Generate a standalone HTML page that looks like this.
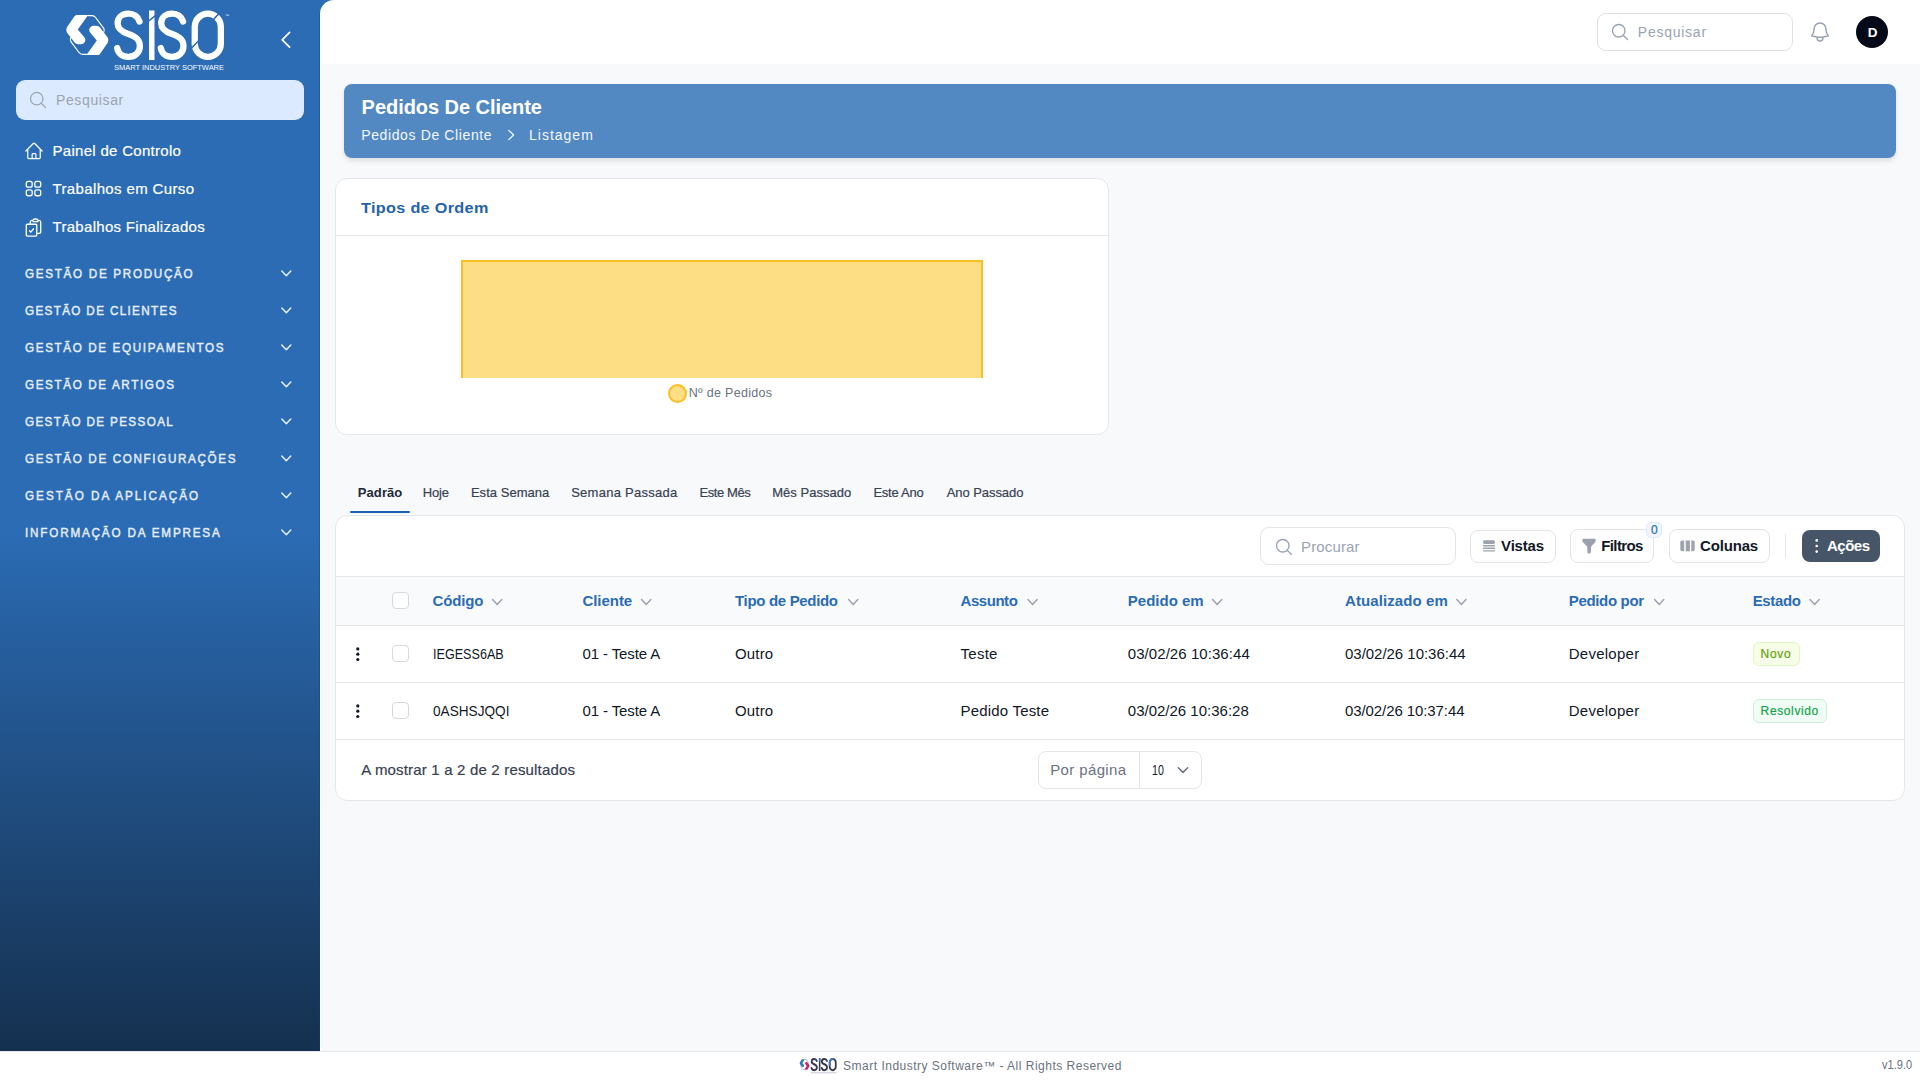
<!DOCTYPE html>
<html><head><meta charset="utf-8">
<style>
*{box-sizing:border-box;margin:0;padding:0}
html,body{width:1920px;height:1080px;overflow:hidden;background:#f8f9fb;font-family:"Liberation Sans",sans-serif;color:#111827}
.a{position:absolute;white-space:nowrap}
.t{line-height:1}
#side{position:absolute;left:0;top:0;width:320px;height:1051px;background:linear-gradient(to bottom,#2b6cb5 0%,#2b6cb5 50%,#15304f 100%)}
#top{position:absolute;left:320px;top:0;width:1600px;height:64px;background:#fff;border-top-left-radius:14px}
svg{display:block}
.card{position:absolute;background:#fff;border:1px solid #e5e7eb;border-radius:12px}
.btn{position:absolute;background:#fff;border:1px solid #e2e4e8;border-radius:8px}
.m{-webkit-text-stroke:0.2px currentColor}
.b{font-weight:700}
.s{-webkit-text-stroke:0.45px currentColor}
</style></head><body>

<div id="side"></div>
<div class="a" style="left:318px;top:0;width:18px;height:18px;background:#2b6cb5"></div>
<div id="top"></div>
<div class="a" style="left:319px;top:12px;width:1px;height:1039px;background:rgba(20,60,120,.35)"></div>
<div class="a" style="left:320px;top:64px;width:1px;height:987px;background:#fff"></div>
<!-- logo -->
<svg class="a" style="left:0;top:0" width="320" height="80" viewBox="0 0 320 80">
 <g fill="#fff">
  <path d="M76.7 15.1 L88.2 15.1 L77.8 29.6 L84.3 37.2 Q86.6 40.5 84 43 Q82.5 44.3 80.5 44.2 L78 44.2 Q76 44.2 74.6 42.6 L66.9 32.6 Q65.5 30 66.9 27.2 L74.3 16.6 Q75.3 15.1 76.7 15.1 Z"/>
  <path d="M97.9 54.9 L86.4 54.9 L96.8 40.4 L90.3 32.8 Q88 29.5 90.6 27 Q92.1 25.7 94.1 25.8 L96.6 25.8 Q98.6 25.8 100 27.4 L107.7 37.4 Q109.1 40 107.7 42.8 L100.3 53.4 Q99.3 54.9 97.9 54.9 Z"/>
 </g>
 <g fill="none" stroke="#fff" stroke-width="1.2">
  <path d="M87.8 15.7 L92 15.7 Q94.2 15.7 95.6 17.5 L103.7 28.3 Q105 30.5 103.6 32.6"/>
  <path d="M86.8 54.3 L82.6 54.3 Q80.4 54.3 79 52.5 L70.9 41.7 Q69.6 39.5 71 37.4"/>
 </g>
 <g fill="none" stroke="#fff" stroke-width="6.3" stroke-linecap="round">
  <path id="sp" d="M139.5 21.5 C138 16.5 133.5 13.65 128.5 13.65 C122 13.65 117.6 17.5 117.6 23.2 C117.6 29.5 122.5 32 128.5 34 C135 36.2 139.9 39 139.9 46 C139.9 52.5 135 56.85 128.5 56.85 C122 56.85 118 53 117.2 48"/>
  <path d="M183.1 21.5 C181.6 16.5 177.1 13.65 172.1 13.65 C165.6 13.65 161.2 17.5 161.2 23.2 C161.2 29.5 166.1 32 172.1 34 C178.6 36.2 183.5 39 183.5 46 C183.5 52.5 178.6 56.85 172.1 56.85 C165.6 56.85 161.6 53 160.8 48"/>
  <rect x="194.75" y="13.65" width="26.1" height="43.2" rx="13.05"/>
 </g>
 <rect x="149" y="10.5" width="5.5" height="49.5" fill="#fff"/>
 <g stroke="#2b6cb5" stroke-width="1.6" fill="none">
  <path d="M147.5 22 L156 15.2"/>
  <path d="M211.5 21.5 L219.5 13"/>
  <path d="M191 48.5 L199.5 40"/>
 </g>
 <text x="225" y="17" font-size="4" fill="#fff" font-family="Liberation Sans">™</text>
 <text x="114" y="70" font-size="7.6" fill="#fff" font-family="Liberation Sans" textLength="110" lengthAdjust="spacingAndGlyphs">SMART INDUSTRY SOFTWARE</text>
</svg>
<svg class="a" style="left:270px;top:24px" width="30" height="32" viewBox="270 24 30 32"><path d="M289.6 32.4 L282.2 39.8 L289.6 47.2" fill="none" stroke="#fff" stroke-width="1.7" stroke-linecap="round" stroke-linejoin="round"/></svg>
<div class="a" style="left:16px;top:80px;width:288px;height:40px;background:#dbeafe;border-radius:9px"></div>
<svg class="a" style="left:27.9px;top:90.2px" width="20" height="20" viewBox="0 0 24 24"><path d="m21 21-5.197-5.197m0 0A7.5 7.5 0 1 0 5.196 5.196a7.5 7.5 0 0 0 10.607 10.607Z" fill="none" stroke="#9ca3af" stroke-width="1.5" stroke-linecap="round"/></svg>
<svg class="a" style="left:23.75px;top:140.7px" width="20" height="20" viewBox="0 0 24 24"><path d="m2.25 12 8.954-8.955c.44-.439 1.152-.439 1.591 0L21.750 12M4.5 9.75v10.125c0 .621.504 1.125 1.125 1.125H9.75v-4.875c0-.621.504-1.125 1.125-1.125h2.25c.621 0 1.125.504 1.125 1.125V21h4.125c.621 0 1.125-.504 1.125-1.125V9.75M8.25 21h8.250" fill="none" stroke="#fff" stroke-width="1.5" stroke-linecap="round" stroke-linejoin="round"/></svg>
<svg class="a" style="left:23.3px;top:178.2px" width="21" height="21" viewBox="0 0 24 24"><path d="M3.75 6A2.25 2.25 0 0 1 6 3.750h2.25A2.25 2.25 0 0 1 10.5 6v2.25a2.25 2.25 0 0 1-2.25 2.25H6a2.25 2.25 0 0 1-2.25-2.25V6ZM3.75 15.75A2.25 2.25 0 0 1 6 13.5h2.25a2.25 2.25 0 0 1 2.25 2.25V18a2.25 2.25 0 0 1-2.25 2.25H6A2.25 2.25 0 0 1 3.75 18v-2.25ZM13.5 6a2.25 2.25 0 0 1 2.25-2.25H18A2.25 2.25 0 0 1 20.25 6v2.25A2.25 2.25 0 0 1 18 10.5h-2.25a2.25 2.25 0 0 1-2.25-2.25V6ZM13.5 15.75a2.25 2.25 0 0 1 2.25-2.25H18a2.25 2.25 0 0 1 2.25 2.25V18A2.25 2.25 0 0 1 18 20.25h-2.25A2.25 2.25 0 0 1 13.5 18v-2.25Z" fill="none" stroke="#fff" stroke-width="1.5"/></svg>
<svg class="a" style="left:23.1px;top:216.5px" width="21" height="21" viewBox="0 0 24 24"><path d="M11.35 3.836c-.065.21-.1.433-.1.664 0 .414.336.75.75.75h4.5a.75.75 0 0 0 .75-.75 2.25 2.25 0 0 0-.1-.664m-5.8 0A2.251 2.251 0 0 1 13.5 2.25H15c1.012 0 1.867.668 2.15 1.586m-5.8 0c-.376.023-.75.05-1.124.08C9.095 4.010 8.250 4.973 8.250 6.108V8.25m8.9-4.414c.376.023.75.05 1.124.08 1.131.094 1.976 1.057 1.976 2.192V16.5A2.25 2.25 0 0 1 18 18.75h-2.25m-7.5-10.5H4.875c-.621 0-1.125.504-1.125 1.125v11.25c0 .621.504 1.125 1.125 1.125h9.75c.621 0 1.125-.504 1.125-1.125V18.75m-7.5-10.5h6.375c.621 0 1.125.504 1.125 1.125v9.375m-8.25-3 1.5 1.5 3-3.75" fill="none" stroke="#fff" stroke-width="1.5" stroke-linecap="round" stroke-linejoin="round"/></svg>
<svg class="a" style="left:270px;top:260px" width="30" height="290" viewBox="270 260 30 290"><g fill="none" stroke="#e6eefa" stroke-width="1.5" stroke-linecap="round" stroke-linejoin="round">
 <path d="M281.8 271 L286.3 275.8 L290.8 271"/><path d="M281.8 308 L286.3 312.8 L290.8 308"/><path d="M281.8 345 L286.3 349.8 L290.8 345"/><path d="M281.8 382 L286.3 386.8 L290.8 382"/><path d="M281.8 419 L286.3 423.8 L290.8 419"/><path d="M281.8 456 L286.3 460.8 L290.8 456"/><path d="M281.8 493 L286.3 497.8 L290.8 493"/><path d="M281.8 530 L286.3 534.8 L290.8 530"/></g></svg>

<!-- topbar -->
<div class="a" style="left:1597px;top:13px;width:196px;height:38px;border:1px solid #dfe2e7;border-radius:9px;background:#fff"></div>
<svg class="a" style="left:1610px;top:22.3px" width="20" height="20" viewBox="0 0 24 24"><path d="m21 21-5.197-5.197m0 0A7.5 7.5 0 1 0 5.196 5.196a7.5 7.5 0 0 0 10.607 10.607Z" fill="none" stroke="#9aa3b2" stroke-width="1.6" stroke-linecap="round"/></svg>
<svg class="a" style="left:1808px;top:20.25px" width="24" height="24" viewBox="0 0 24 24"><path d="M14.857 17.082a23.848 23.848 0 0 0 5.454-1.31A8.967 8.967 0 0 1 18 9.75V9A6 6 0 0 0 6 9v.75a8.967 8.967 0 0 1-2.312 6.022c1.733.64 3.56 1.085 5.455 1.31m5.714 0a24.255 24.255 0 0 1-5.714 0m5.714 0a3 3 0 1 1-5.714 0" fill="none" stroke="#9aa3b2" stroke-width="1.5" stroke-linecap="round" stroke-linejoin="round"/></svg>
<div class="a" style="left:1856px;top:16px;width:32px;height:32px;border-radius:50%;background:#050a18"></div>

<!-- header card -->
<div class="a" style="left:344px;top:84px;width:1552px;height:73.5px;background:#5389c3;border-radius:8px;box-shadow:0 3px 5px rgba(0,0,0,.10)"></div>
<svg class="a" style="left:500px;top:125px" width="20" height="20" viewBox="500 125 20 20"><path d="M508.8 130.4 L513.6 135 L508.8 139.6" fill="none" stroke="#f3f7fc" stroke-width="1.3" stroke-linecap="round" stroke-linejoin="round"/></svg>

<!-- chart card -->
<div class="card" style="left:335px;top:178px;width:774px;height:257px"></div>
<div class="a" style="left:336px;top:235px;width:772px;height:1px;background:#e5e7eb"></div>
<div class="a" style="left:461px;top:260px;width:522px;height:118px;background:#fdde84;border:2px solid #fbbf24;border-bottom:0"></div>
<div class="a" style="left:667.5px;top:384px;width:19px;height:19px;border-radius:50%;background:#fdde84;border:2px solid #fbbf24"></div>

<!-- tabs -->
<div class="a" style="left:350px;top:511px;width:60px;height:2px;background:#1d5fb4;border-radius:1px"></div>

<!-- table card -->
<div class="card" style="left:335px;top:515px;width:1570px;height:286px;overflow:hidden">
  <div style="position:absolute;left:0;top:60px;width:100%;height:50px;background:#f9fafb;border-top:1px solid #e5e7eb;border-bottom:1px solid #e5e7eb"></div>
  <div style="position:absolute;left:0;top:166px;width:100%;height:1px;background:#e5e7eb"></div>
  <div style="position:absolute;left:0;top:223px;width:100%;height:1px;background:#e5e7eb"></div>
</div>
<!-- toolbar -->
<div class="btn" style="left:1260px;top:527px;width:196px;height:38px;border-radius:9px"></div>
<svg class="a" style="left:1273.5px;top:536.5px" width="20" height="20" viewBox="0 0 24 24"><path d="m21 21-5.197-5.197m0 0A7.5 7.5 0 1 0 5.196 5.196a7.5 7.5 0 0 0 10.607 10.607Z" fill="none" stroke="#9aa3b2" stroke-width="1.6" stroke-linecap="round"/></svg>
<div class="btn" style="left:1470px;top:529.5px;width:86px;height:33px"></div>
<svg class="a" style="left:1480px;top:537px" width="18" height="18" viewBox="1480 537 18 18"><g fill="#9ca3af"><rect x="1483" y="540.3" width="12" height="3.6" rx="1.6"/><rect x="1483" y="545" width="12" height="1.4" rx=".5"/><rect x="1483" y="547.6" width="12" height="1.4" rx=".5"/><rect x="1483" y="550.2" width="12" height="1.4" rx=".5"/></g></svg>
<div class="btn" style="left:1570px;top:529px;width:84px;height:34px"></div>
<svg class="a" style="left:1580px;top:537px" width="18" height="18" viewBox="1580 537 18 18"><path d="M1582.4 539.6 Q1582.4 538.8 1583.2 538.8 L1594.8 538.8 Q1595.6 538.8 1595.6 539.6 L1595.6 541 Q1595.6 541.6 1595 542.2 L1591.2 546.4 L1590.8 552.2 Q1590.7 553.4 1589.6 553.4 L1588.6 553.4 Q1587.6 553.4 1587.5 552.4 L1587.1 546.4 L1583 542.2 Q1582.4 541.6 1582.4 541 Z" fill="#9aa2b0"/></svg>
<div class="a" style="left:1645.5px;top:522px;width:16px;height:16px;border-radius:5px;background:#eff6ff;border:1px solid #dbeafe"></div>
<div class="btn" style="left:1668.5px;top:529px;width:101.5px;height:34px"></div>
<svg class="a" style="left:1678px;top:537px" width="20" height="18" viewBox="1678 537 20 18"><g fill="#9ca3af"><path d="M1682 540.5 L1684.2 540.5 L1684.2 551.3 L1682 551.3 Q1680.3 551.3 1680.3 549.6 L1680.3 542.2 Q1680.3 540.5 1682 540.5 Z"/><rect x="1685.7" y="540.5" width="4.2" height="10.8"/><path d="M1691.3 540.5 L1693 540.5 Q1694.7 540.5 1694.7 542.2 L1694.7 549.6 Q1694.7 551.3 1693 551.3 L1691.3 551.3 Z"/></g></svg>
<div class="a" style="left:1785px;top:534px;width:1px;height:24px;background:#e5e7eb"></div>
<div class="a" style="left:1802px;top:530px;width:78px;height:32px;border-radius:8px;background:#475569"></div>
<svg class="a" style="left:1812px;top:536px" width="10" height="20" viewBox="1812 536 10 20"><g fill="#fff"><circle cx="1816.7" cy="540.4" r="1.3"/><circle cx="1816.7" cy="546" r="1.3"/><circle cx="1816.7" cy="551.6" r="1.3"/></g></svg>

<!-- checkboxes -->
<div class="a" style="left:391.5px;top:592.3px;width:17px;height:17px;border:1px solid #d5d9df;border-radius:4px;background:#fff"></div>
<div class="a" style="left:391.5px;top:645.3px;width:17px;height:17px;border:1px solid #d5d9df;border-radius:4px;background:#fff"></div>
<div class="a" style="left:391.5px;top:702.3px;width:17px;height:17px;border:1px solid #d5d9df;border-radius:4px;background:#fff"></div>
<svg class="a" style="left:350px;top:640px" width="16" height="85" viewBox="350 640 16 85"><g fill="#111827"><circle cx="357.8" cy="648.9" r="1.6"/><circle cx="357.8" cy="654.2" r="1.6"/><circle cx="357.8" cy="659.5" r="1.6"/><circle cx="357.8" cy="705.9" r="1.6"/><circle cx="357.8" cy="711.2" r="1.6"/><circle cx="357.8" cy="716.5" r="1.6"/></g></svg>
<svg class="a" style="left:480px;top:590px" width="1350" height="25" viewBox="480 590 1350 25"><g fill="none" stroke="#9ca3af" stroke-width="1.5" stroke-linecap="round" stroke-linejoin="round">
 <path d="M492.6 599.6 L497.2 604.4 L501.8 599.6"/>
 <path d="M641.6 599.6 L646.2 604.4 L650.8 599.6"/>
 <path d="M848.6 599.6 L853.2 604.4 L857.8 599.6"/>
 <path d="M1028 599.6 L1032.6 604.4 L1037.2 599.6"/>
 <path d="M1212.6 599.6 L1217.2 604.4 L1221.8 599.6"/>
 <path d="M1456.8 599.6 L1461.4 604.4 L1466 599.6"/>
 <path d="M1654.6 599.6 L1659.2 604.4 L1663.8 599.6"/>
 <path d="M1810 599.6 L1814.6 604.4 L1819.2 599.6"/>
</g></svg>
<!-- badges -->
<div class="a" style="left:1753px;top:642px;width:46.5px;height:24px;border-radius:6px;background:#f7fee7;border:1px solid #e2f5c4"></div>
<div class="a" style="left:1753px;top:699px;width:74px;height:24px;border-radius:6px;background:#f0fdf4;border:1px solid #cdeed8"></div>
<!-- pagination -->
<div class="btn" style="left:1038px;top:751px;width:164px;height:38px;border-color:#e3e5e9"></div>
<div class="a" style="left:1139px;top:752px;width:1px;height:36px;background:#e5e7eb"></div>
<svg class="a" style="left:1174px;top:762px" width="18" height="16" viewBox="1174 762 18 16"><path d="M1178.3 767.8 L1183 772.4 L1187.7 767.8" fill="none" stroke="#6b7280" stroke-width="1.5" stroke-linecap="round" stroke-linejoin="round"/></svg>

<!-- footer -->
<div class="a" style="left:0;top:1051px;width:1920px;height:29px;background:#fff;border-top:1px solid #e5e7eb"></div>
<svg class="a" style="left:780px;top:1050px" width="60" height="30" viewBox="780 1050 60 30">
 <g transform="matrix(0.2336 0 0 0.2606 784.18 1055.36)">
  <path fill="#2f73c0" d="M76.7 15.1 L88.2 15.1 L77.8 29.6 L84.3 37.2 Q86.6 40.5 84 43 Q82.5 44.3 80.5 44.2 L78 44.2 Q76 44.2 74.6 42.6 L66.9 32.6 Q65.5 30 66.9 27.2 L74.3 16.6 Q75.3 15.1 76.7 15.1 Z"/>
  <path fill="#c81d77" d="M97.9 54.9 L86.4 54.9 L96.8 40.4 L90.3 32.8 Q88 29.5 90.6 27 Q92.1 25.7 94.1 25.8 L96.6 25.8 Q98.6 25.8 100 27.4 L107.7 37.4 Q109.1 40 107.7 42.8 L100.3 53.4 Q99.3 54.9 97.9 54.9 Z"/>
  <g fill="none" stroke="#b8bcc8" stroke-width="4">
   <path d="M87.8 15.7 L92 15.7 Q94.2 15.7 95.6 17.5 L103.7 28.3 Q105 30.5 103.6 32.6"/>
   <path d="M86.8 54.3 L82.6 54.3 Q80.4 54.3 79 52.5 L70.9 41.7 Q69.6 39.5 71 37.4"/>
  </g>
  <g fill="none" stroke="#34344a" stroke-width="7.5" stroke-linecap="round">
   <path d="M139.5 21.5 C138 16.5 133.5 13.65 128.5 13.65 C122 13.65 117.6 17.5 117.6 23.2 C117.6 29.5 122.5 32 128.5 34 C135 36.2 139.9 39 139.9 46 C139.9 52.5 135 56.85 128.5 56.85 C122 56.85 118 53 117.2 48"/>
   <path d="M183.1 21.5 C181.6 16.5 177.1 13.65 172.1 13.65 C165.6 13.65 161.2 17.5 161.2 23.2 C161.2 29.5 166.1 32 172.1 34 C178.6 36.2 183.5 39 183.5 46 C183.5 52.5 178.6 56.85 172.1 56.85 C165.6 56.85 161.6 53 160.8 48"/>
   <rect x="194.75" y="13.65" width="26.1" height="43.2" rx="13.05"/>
  </g>
  <path d="M194.75 40 L194.75 26.7 A13.05 13.05 0 0 1 207.8 13.65 L212 13.65" fill="none" stroke="#3a7ac6" stroke-width="7.5"/>
  <rect x="148.5" y="10.5" width="6.5" height="49.5" fill="#34344a"/>
  <rect x="148.5" y="10.5" width="6.5" height="14" fill="#3a7ac6"/>
  <rect x="114" y="64" width="110" height="5" fill="#d5d7de"/>
 </g>
</svg>

<div class="a t" id="sb_search" style="left:56.00px;top:93.15px;font-size:14px;letter-spacing:0.625px;color:#9ca3af;">Pesquisar</div>
<div class="a t m" id="nav1" style="left:52.50px;top:142.70px;font-size:15px;letter-spacing:0.294px;color:#ffffff;">Painel de Controlo</div>
<div class="a t m" id="nav2" style="left:52.50px;top:180.70px;font-size:15px;letter-spacing:0.365px;color:#ffffff;">Trabalhos em Curso</div>
<div class="a t m" id="nav3" style="left:52.50px;top:218.70px;font-size:15px;letter-spacing:0.300px;color:#ffffff;">Trabalhos Finalizados</div>
<div class="a t s" id="sec1" style="left:24.80px;top:267.20px;font-size:13px;letter-spacing:1.864px;color:#e6eefa;transform:scaleX(0.9);transform-origin:0 0;">GESTÃO DE PRODUÇÃO</div>
<div class="a t s" id="sec2" style="left:24.80px;top:304.20px;font-size:13px;letter-spacing:1.486px;color:#e6eefa;transform:scaleX(0.9);transform-origin:0 0;">GESTÃO DE CLIENTES</div>
<div class="a t s" id="sec3" style="left:24.80px;top:341.20px;font-size:13px;letter-spacing:1.790px;color:#e6eefa;transform:scaleX(0.9);transform-origin:0 0;">GESTÃO DE EQUIPAMENTOS</div>
<div class="a t s" id="sec4" style="left:24.80px;top:378.20px;font-size:13px;letter-spacing:1.788px;color:#e6eefa;transform:scaleX(0.9);transform-origin:0 0;">GESTÃO DE ARTIGOS</div>
<div class="a t s" id="sec5" style="left:24.80px;top:415.20px;font-size:13px;letter-spacing:1.504px;color:#e6eefa;transform:scaleX(0.9);transform-origin:0 0;">GESTÃO DE PESSOAL</div>
<div class="a t s" id="sec6" style="left:24.80px;top:452.20px;font-size:13px;letter-spacing:1.801px;color:#e6eefa;transform:scaleX(0.9);transform-origin:0 0;">GESTÃO DE CONFIGURAÇÕES</div>
<div class="a t s" id="sec7" style="left:24.80px;top:489.20px;font-size:13px;letter-spacing:2.224px;color:#e6eefa;transform:scaleX(0.9);transform-origin:0 0;">GESTÃO DA APLICAÇÃO</div>
<div class="a t s" id="sec8" style="left:24.80px;top:526.20px;font-size:13px;letter-spacing:2.009px;color:#e6eefa;transform:scaleX(0.9);transform-origin:0 0;">INFORMAÇÃO DA EMPRESA</div>
<div class="a t" id="tb_search" style="left:1637.80px;top:24.55px;font-size:14px;letter-spacing:0.750px;color:#9aa3b2;">Pesquisar</div>
<div class="a t b" id="avatar" style="left:1867.80px;top:25.57px;font-size:13.5px;letter-spacing:0.000px;color:#ffffff;">D</div>
<div class="a t b" id="title" style="left:361.60px;top:97.17px;font-size:20px;letter-spacing:-0.047px;color:#ffffff;">Pedidos De Cliente</div>
<div class="a t" id="bc1" style="left:361.20px;top:128.05px;font-size:14px;letter-spacing:0.624px;color:#f3f7fc;">Pedidos De Cliente</div>
<div class="a t" id="bc2" style="left:529.00px;top:128.05px;font-size:14px;letter-spacing:1.000px;color:#f3f7fc;">Listagem</div>
<div class="a t b" id="chart_t" style="left:360.80px;top:200.40px;font-size:15px;letter-spacing:0.305px;color:#2563a8;transform:scaleX(1.08);transform-origin:0 0;">Tipos de Ordem</div>
<div class="a t" id="legend" style="left:688.80px;top:387.32px;font-size:12.5px;letter-spacing:0.300px;color:#6b7280;">Nº de Pedidos</div>
<div class="a t b" id="tab1" style="left:357.80px;top:486.00px;font-size:13px;letter-spacing:0.080px;color:#1f2937;">Padrão</div>
<div class="a t m" id="tab2" style="left:422.80px;top:486.00px;font-size:13px;letter-spacing:-0.200px;color:#374151;">Hoje</div>
<div class="a t m" id="tab3" style="left:470.90px;top:486.00px;font-size:13px;letter-spacing:0.040px;color:#374151;">Esta Semana</div>
<div class="a t m" id="tab4" style="left:571.20px;top:486.00px;font-size:13px;letter-spacing:0.262px;color:#374151;">Semana Passada</div>
<div class="a t m" id="tab5" style="left:699.50px;top:486.00px;font-size:13px;letter-spacing:-0.429px;color:#374151;">Este Mês</div>
<div class="a t m" id="tab6" style="left:772.20px;top:486.00px;font-size:13px;letter-spacing:0.020px;color:#374151;">Mês Passado</div>
<div class="a t m" id="tab7" style="left:873.40px;top:486.00px;font-size:13px;letter-spacing:-0.257px;color:#374151;">Este Ano</div>
<div class="a t m" id="tab8" style="left:946.70px;top:486.00px;font-size:13px;letter-spacing:-0.060px;color:#374151;">Ano Passado</div>
<div class="a t" id="procurar" style="left:1301.00px;top:538.70px;font-size:15px;letter-spacing:0.143px;color:#9aa3b2;">Procurar</div>
<div class="a t b" id="vistas" style="left:1501.10px;top:538.30px;font-size:15px;letter-spacing:-0.200px;color:#111827;">Vistas</div>
<div class="a t b" id="filtros" style="left:1601.20px;top:538.30px;font-size:15px;letter-spacing:-0.600px;color:#111827;">Filtros</div>
<div class="a t b" id="colunas" style="left:1700.00px;top:538.30px;font-size:15px;letter-spacing:-0.167px;color:#111827;">Colunas</div>
<div class="a t b" id="acoes" style="left:1827.00px;top:538.30px;font-size:15px;letter-spacing:-0.500px;color:#ffffff;">Ações</div>
<div class="a t m" id="badge0" style="left:1651.00px;top:523.94px;font-size:12px;letter-spacing:0.000px;color:#2b6cb5;">0</div>
<div class="a t b" id="h1" style="left:432.50px;top:592.70px;font-size:15px;letter-spacing:-0.160px;color:#2b6cb5;">Código</div>
<div class="a t b" id="h2" style="left:582.40px;top:592.70px;font-size:15px;letter-spacing:-0.033px;color:#2b6cb5;">Cliente</div>
<div class="a t b" id="h3" style="left:735.00px;top:592.70px;font-size:15px;letter-spacing:-0.323px;color:#2b6cb5;">Tipo de Pedido</div>
<div class="a t b" id="h4" style="left:960.60px;top:592.70px;font-size:15px;letter-spacing:-0.467px;color:#2b6cb5;">Assunto</div>
<div class="a t b" id="h5" style="left:1127.80px;top:592.70px;font-size:15px;letter-spacing:0.000px;color:#2b6cb5;">Pedido em</div>
<div class="a t b" id="h6" style="left:1345.00px;top:592.70px;font-size:15px;letter-spacing:0.100px;color:#2b6cb5;">Atualizado em</div>
<div class="a t b" id="h7" style="left:1568.75px;top:592.70px;font-size:15px;letter-spacing:-0.333px;color:#2b6cb5;">Pedido por</div>
<div class="a t b" id="h8" style="left:1752.70px;top:592.70px;font-size:15px;letter-spacing:-0.360px;color:#2b6cb5;">Estado</div>
<div class="a t" id="r1c1" style="left:432.50px;top:645.70px;font-size:15px;letter-spacing:0.000px;color:#111827;transform:scaleX(0.8402);transform-origin:0 0;">IEGESS6AB</div>
<div class="a t" id="r1c2" style="left:582.40px;top:645.70px;font-size:15px;letter-spacing:-0.091px;color:#111827;">01 - Teste A</div>
<div class="a t" id="r1c3" style="left:735.00px;top:645.70px;font-size:15px;letter-spacing:0.150px;color:#111827;">Outro</div>
<div class="a t" id="r1c4" style="left:960.60px;top:645.70px;font-size:15px;letter-spacing:0.250px;color:#111827;">Teste</div>
<div class="a t" id="r1c5" style="left:1127.80px;top:645.70px;font-size:15px;letter-spacing:0.062px;color:#111827;">03/02/26 10:36:44</div>
<div class="a t" id="r1c6" style="left:1345.00px;top:645.70px;font-size:15px;letter-spacing:-0.025px;color:#111827;">03/02/26 10:36:44</div>
<div class="a t" id="r1c7" style="left:1568.75px;top:645.70px;font-size:15px;letter-spacing:0.250px;color:#111827;">Developer</div>
<div class="a t m" id="r1c8" style="left:1760.60px;top:648.14px;font-size:12px;letter-spacing:0.667px;color:#65a30d;">Novo</div>
<div class="a t" id="r2c1" style="left:432.50px;top:702.50px;font-size:15px;letter-spacing:0.000px;color:#111827;transform:scaleX(0.9085);transform-origin:0 0;">0ASHSJQQI</div>
<div class="a t" id="r2c2" style="left:582.40px;top:702.50px;font-size:15px;letter-spacing:-0.091px;color:#111827;">01 - Teste A</div>
<div class="a t" id="r2c3" style="left:735.00px;top:702.50px;font-size:15px;letter-spacing:0.150px;color:#111827;">Outro</div>
<div class="a t" id="r2c4" style="left:960.60px;top:702.50px;font-size:15px;letter-spacing:0.182px;color:#111827;">Pedido Teste</div>
<div class="a t" id="r2c5" style="left:1127.80px;top:702.50px;font-size:15px;letter-spacing:0.000px;color:#111827;">03/02/26 10:36:28</div>
<div class="a t" id="r2c6" style="left:1345.00px;top:702.50px;font-size:15px;letter-spacing:-0.088px;color:#111827;">03/02/26 10:37:44</div>
<div class="a t" id="r2c7" style="left:1568.75px;top:702.50px;font-size:15px;letter-spacing:0.250px;color:#111827;">Developer</div>
<div class="a t m" id="r2c8" style="left:1760.60px;top:705.14px;font-size:12px;letter-spacing:0.625px;color:#16a34a;">Resolvido</div>
<div class="a t m" id="showing" style="left:361.20px;top:762.30px;font-size:15px;letter-spacing:0.180px;color:#374151;">A mostrar 1 a 2 de 2 resultados</div>
<div class="a t" id="porpag" style="left:1050.20px;top:761.50px;font-size:15px;letter-spacing:0.378px;color:#6b7280;">Por página</div>
<div class="a t" id="ten" style="left:1151.60px;top:761.50px;font-size:15px;letter-spacing:0.000px;color:#111827;transform:scaleX(0.7057);transform-origin:0 0;">10</div>
<div class="a t" id="foot" style="left:843.10px;top:1059.54px;font-size:12px;letter-spacing:0.493px;color:#6b7280;">Smart Industry Software™ - All Rights Reserved</div>
<div class="a t" id="ver" style="left:1881.80px;top:1059.32px;font-size:12.5px;letter-spacing:0.000px;color:#6b7280;transform:scaleX(0.8867);transform-origin:0 0;">v1.9.0</div>
</body></html>
